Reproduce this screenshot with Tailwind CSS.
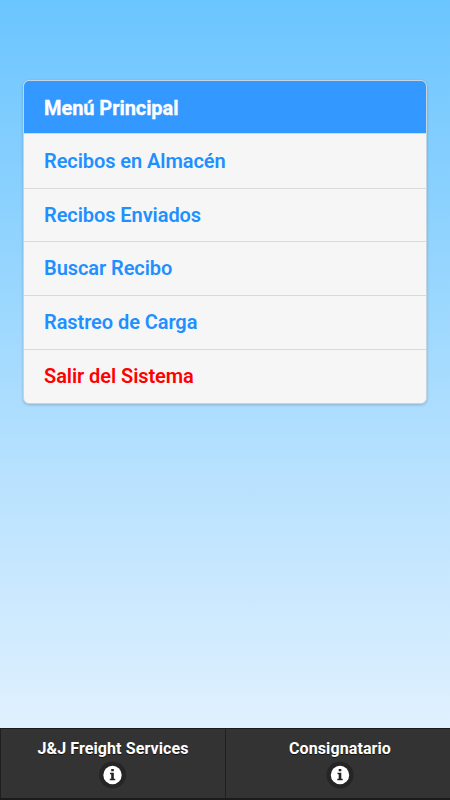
<!DOCTYPE html>
<html lang="es">
<head>
    <meta charset="UTF-8">
    <meta name="viewport" content="width=device-width, initial-scale=1.0">
    <title>Menú Principal - J&amp;J Freight Services</title>
    <script src="https://cdn.jsdelivr.net/npm/@tailwindcss/browser@4"></script>
</head>
<body class="h-screen flex flex-col overflow-hidden bg-[linear-gradient(to_bottom,#6bc5ff,#e0f1fe_728px)] font-['Roboto',sans-serif] font-bold">

    <main class="flex-1 px-[23px] pt-20">
        <ul class="rounded-md border border-[#c4d4e0] bg-[#f6f6f6] overflow-hidden shadow-[0_1px_3px_rgba(0,0,0,0.2)] divide-y divide-[#dadada] text-[20px] leading-[53px] font-semibold tracking-[-0.07px]">
            <li class="h-[53px] pl-5 bg-[#3398ff] text-white leading-[54px] font-bold tracking-[-0.07px] [-webkit-text-stroke:0.3px_#fff]">Menú Principal</li>
            <li><a href="#" class="block h-[54px] pl-5 leading-[54px] text-[#1e90ff]">Recibos en Almacén</a></li>
            <li><a href="#" class="block h-[52px] pl-5 leading-[52px] text-[#1e90ff]">Recibos Enviados</a></li>
            <li><a href="#" class="block h-[53px] pl-5 text-[#1e90ff]">Buscar Recibo</a></li>
            <li><a href="#" class="block h-[53px] pl-5 text-[#1e90ff]">Rastreo de Carga</a></li>
            <li><a href="#" class="block h-[53px] pl-5 text-[#ff0000]">Salir del Sistema</a></li>
        </ul>
    </main>

    <footer class="h-[72px] grid grid-cols-[226px_1fr] border-t border-b-2 border-[#1b1b1b] bg-[#333] text-white text-base tracking-[0.1px] [text-shadow:0_1px_0_#111]">
        <a href="#" class="flex flex-col items-center border-x border-[#1f1f1f] pt-2">
            <span class="leading-6">J&amp;J Freight Services</span>
            <svg class="w-7 h-7" viewBox="0 0 28 28">
                <circle cx="13.5" cy="14" r="13.5" fill="#252525"/>
                <circle cx="13.5" cy="14" r="9.2" fill="#fff"/>
                <path d="M12.2 8h2.6v2.2h-2.6zM11 11.7h3.8v6h1.4v1.5h-5.4v-1.5h1.4v-4.5h-1.2z" fill="#222"/>
            </svg>
        </a>
        <a href="#" class="flex flex-col items-center pt-2 pl-1">
            <span class="leading-6">Consignatario</span>
            <svg class="w-7 h-7" viewBox="0 0 28 28">
                <circle cx="14" cy="14" r="13.5" fill="#252525"/>
                <circle cx="14" cy="14" r="9.2" fill="#fff"/>
                <path d="M12.7 8h2.6v2.2h-2.6zM11.5 11.7h3.8v6h1.4v1.5h-5.4v-1.5h1.4v-4.5h-1.2z" fill="#222"/>
            </svg>
        </a>
    </footer>

</body>
</html>
